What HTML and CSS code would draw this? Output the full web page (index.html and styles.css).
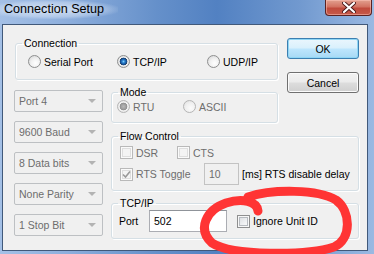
FILE: index.html
```html
<!DOCTYPE html>
<html lang="en">
<head>
    <meta charset="UTF-8">
    <title>Connection Setup</title>
    <link rel="stylesheet" href="styles.css">
</head>
<body>
    <div class="window">
        <div class="titlebar">
            <span class="title">Connection Setup</span>
            <div class="close-btn">
                <svg width="14" height="11" viewBox="0 0 14 11">
                    <path d="M2 1 L12 10 M12 1 L2 10" stroke="#4a1a1a" stroke-width="4" stroke-linecap="round"/>
                    <path d="M2 1 L12 10 M12 1 L2 10" stroke="#fff" stroke-width="2.2" stroke-linecap="round"/>
                </svg>
            </div>
        </div>
        <div class="client">
            <fieldset class="group conn">
                <legend>Connection</legend>
                <div class="conn-row">
                    <label class="opt"><span class="radio"></span>Serial Port</label>
                    <label class="opt"><span class="radio checked"></span>TCP/IP</label>
                    <label class="opt"><span class="radio"></span>UDP/IP</label>
                </div>
            </fieldset>

            <div class="buttons">
                <button class="btn default">OK</button>
                <button class="btn">Cancel</button>
            </div>

            <div class="combos">
                <div class="combo">Port 4<span class="arrow"></span></div>
                <div class="combo">9600 Baud<span class="arrow"></span></div>
                <div class="combo">8 Data bits<span class="arrow"></span></div>
                <div class="combo">None Parity<span class="arrow"></span></div>
                <div class="combo">1 Stop Bit<span class="arrow"></span></div>
            </div>

            <fieldset class="group mode">
                <legend>Mode</legend>
                <div class="mode-row">
                    <label class="opt disabled"><span class="radio checked"></span>RTU</label>
                    <label class="opt disabled"><span class="radio"></span>ASCII</label>
                </div>
            </fieldset>

            <fieldset class="group flow">
                <legend>Flow Control</legend>
                <div class="flow-row">
                    <label class="opt disabled dsr"><span class="check"></span>DSR</label>
                    <label class="opt disabled"><span class="check"></span>CTS</label>
                </div>
                <div class="flow-row second">
                    <label class="opt disabled rts"><span class="check">
                        <svg width="11" height="11" viewBox="0 0 11 11"><path d="M2 5.5 L4.5 8 L9 2.5" fill="none" stroke="#9a9a9a" stroke-width="1.6"/></svg>
                    </span>RTS Toggle</label>
                    <div class="field disabled small">10</div>
                    <span class="unit">[ms] RTS disable delay</span>
                </div>
            </fieldset>

            <fieldset class="group tcp">
                <legend>TCP/IP</legend>
                <div class="tcp-row">
                    <span class="port-label">Port</span>
                    <div class="field port">502</div>
                    <label class="opt"><span class="check"></span>Ignore Unit ID</label>
                </div>
            </fieldset>
        </div>

        <svg class="annotation" width="374" height="254" viewBox="0 0 374 254">
            <path d="M258 211 C257 201 242 198 226 203 C206 210 197 229 212 243 C232 256 306 256 334 247 C352 239 351 211 336 200 C318 189 272 189 248 197"
                  fill="none" stroke="#ff3434" stroke-width="9" stroke-linecap="round" stroke-linejoin="round"/>
        </svg>
    </div>
</body>
</html>
```

FILE: styles.css
```css
* {
    box-sizing: border-box;
}
body {
    margin: 0;
    font-family: "Liberation Sans", Arial, sans-serif;
    font-size: 10.5px;
    color: #000;
}
.window {
    position: relative;
    width: 374px;
    height: 254px;
    display: flex;
    flex-direction: column;
    overflow: hidden;
    background: linear-gradient(90deg, #a4c0e6 0%, #8daedc 18%, #6590ca 42%, #5281c2 58%, #7199cf 80%, #9ab9e2 100%);
}
.titlebar {
    height: 24px;
    display: flex;
    justify-content: space-between;
    align-items: flex-start;
}
.title {
    font-size: 12.6px;
    line-height: 19px;
    padding: 0 14px 0 4px;
    background: radial-gradient(ellipse at 45% 50%, rgba(235, 242, 252, 0.75) 0%, rgba(235, 242, 252, 0.35) 55%, rgba(235, 242, 252, 0) 75%);
}
.close-btn {
    width: 47px;
    height: 16px;
    margin-right: 2px;
    display: flex;
    align-items: center;
    justify-content: center;
    border: 1px solid #5a2222;
    border-top: none;
    border-radius: 0 0 4px 4px;
    background: linear-gradient(#e2a08f 0%, #d27262 45%, #c04a3c 55%, #c65a4a 100%);
    box-shadow: inset 0 0 0 1px rgba(255, 200, 190, 0.5);
}
.client {
    flex: 1;
    margin: 0 6px 3px 2px;
    background: #f0f0f0;
    border: 1px solid #41597a;
    padding: 12px 0 0 11px;
    display: grid;
    grid-template-columns: 97px 176px 72px;
    grid-template-rows: 49px 44px 67px auto;
    grid-template-areas:
        "conn conn btns"
        "combos mode btns"
        "combos flow flow"
        "combos tcp tcp";
    align-items: start;
}
.group {
    margin: 0;
    padding: 0;
    min-width: 0;
    border: 1px solid #d5dfe5;
    border-radius: 3px;
    box-shadow: inset 1px 1px 0 #fff, 1px 1px 0 #fff;
}
.group legend {
    margin-left: 6px;
    padding: 0 2px;
    line-height: 12px;
}
.opt {
    display: flex;
    align-items: center;
    gap: 3px;
    white-space: nowrap;
}
.opt.disabled {
    color: #6d6d6d;
}

/* Connection */
.conn {
    grid-area: conn;
    margin: 0 9px 0 1px;
}
.conn-row {
    display: grid;
    grid-template-columns: 89px 90px auto;
    padding: 6px 0 11px 12px;
    height: 30px;
}

/* Buttons */
.buttons {
    grid-area: btns;
    display: flex;
    flex-direction: column;
    gap: 13px;
    margin-top: 1px;
}
.btn {
    width: 72px;
    height: 21px;
    padding: 0;
    font: inherit;
    color: #000;
    border: 1px solid #707070;
    border-radius: 3px;
    background: linear-gradient(#f2f2f2 0%, #ebebeb 48%, #dddddd 52%, #cfcfcf 100%);
    box-shadow: inset 0 0 0 1px #fbfbfb;
}
.btn.default {
    border-color: #3c7fb1;
    background: linear-gradient(#eaf6fd 0%, #d9f0fc 48%, #bee6fd 52%, #a7d9f5 100%);
    box-shadow: inset 0 0 0 1px #8fd6f5;
}

/* Combos */
.combos {
    grid-area: combos;
    margin-top: 4px;
    display: flex;
    flex-direction: column;
    gap: 9px;
}
.combo {
    width: 89px;
    height: 22px;
    display: flex;
    align-items: center;
    justify-content: space-between;
    padding: 0 6px 0 4px;
    color: #6d6d6d;
    border: 1px solid #bdc0c3;
    border-radius: 2px;
    background: #f0f0f0;
}
.arrow {
    width: 0;
    height: 0;
    border-left: 4px solid transparent;
    border-right: 4px solid transparent;
    border-top: 4px solid #b3b3b3;
}

/* Mode */
.mode {
    grid-area: mode;
    margin-right: 9px;
}
.mode-row {
    display: grid;
    grid-template-columns: 66px auto;
    padding: 2px 0 9px 5px;
    height: 24px;
}

/* Flow control */
.flow {
    grid-area: flow;
}
.flow-row {
    display: flex;
    align-items: center;
    padding: 4px 0 0 8px;
    height: 17px;
}
.flow-row .dsr {
    width: 57px;
}
.flow-row.second {
    padding: 4px 0 5px 8px;
    height: 31px;
}
.flow-row .rts {
    width: 84px;
}
.unit {
    margin-left: 3px;
}

/* TCP/IP */
.tcp {
    grid-area: tcp;
}
.tcp-row {
    display: flex;
    align-items: center;
    padding: 1px 0 6px 7px;
    height: 29px;
}
.port-label {
    width: 30px;
}
.field {
    height: 22px;
    border: 1px solid #abadb3;
    border-top-color: #8f9399;
    background: #fff;
    padding: 0 4px;
    line-height: 20px;
}
.field.disabled {
    color: #6d6d6d;
    background: #f0f0f0;
    border-color: #c3c3c3;
}
.field.small {
    width: 35px;
}
.field.port {
    width: 78px;
    margin-right: 10px;
}

/* Radio buttons and check boxes */
.radio {
    width: 13px;
    height: 13px;
    flex: none;
    border-radius: 50%;
    border: 1px solid #8e8f8f;
    background: radial-gradient(circle at 60% 65%, #ffffff 0%, #f1f1f1 45%, #cfd0d1 100%);
}
.radio.checked {
    background: radial-gradient(circle at 50% 50%, #7fd0f7 0, #2a7fcf 1.5px, #134f93 3px, #2a4466 3.6px, #f7f7f7 4.2px, #e6e6e6 5px, #cacbcc 100%);
}
.opt.disabled .radio {
    border-color: #b5b5b5;
    background: radial-gradient(circle at 60% 65%, #fbfbfb 0%, #f0f0f0 50%, #dcdcdc 100%);
}
.opt.disabled .radio.checked {
    background: radial-gradient(circle at 50% 50%, #b8b8b8 0, #9c9c9c 2.8px, #8a8a8a 3.5px, #f6f6f6 4.2px, #ececec 5px, #d8d8d8 100%);
}
.check {
    width: 13px;
    height: 13px;
    flex: none;
    display: flex;
    align-items: center;
    justify-content: center;
    border: 1px solid #8e8f8f;
    background: linear-gradient(135deg, #d6d9dd 0%, #f4f5f6 70%, #ffffff 100%);
    box-shadow: inset 0 0 0 1px #f7f7f7, inset 0 0 0 2px #b6babf;
}
.opt.disabled .check {
    border-color: #b9b9b9;
    background: #f4f4f4;
    box-shadow: inset 0 0 0 1px #fafafa, inset 0 0 0 2px #dedede;
}

.annotation {
    position: absolute;
    left: 0;
    top: 0;
    pointer-events: none;
}
```
